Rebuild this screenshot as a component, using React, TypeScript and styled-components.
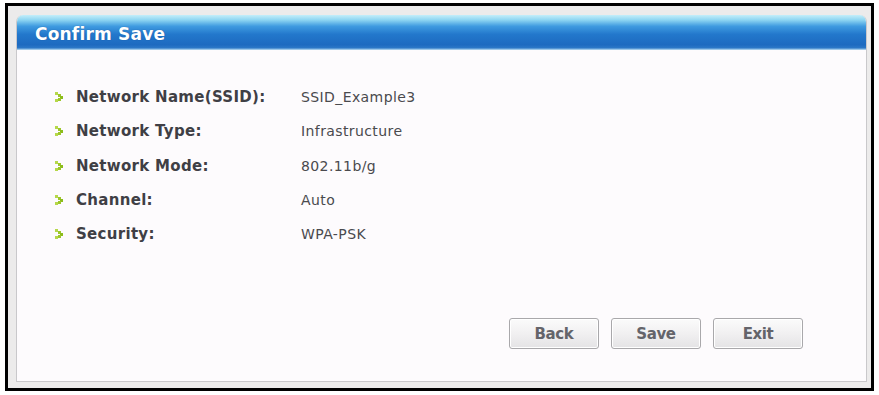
import React from "react";
import styled, { createGlobalStyle } from "styled-components";

const GlobalStyle = createGlobalStyle`
    html, body {
        margin: 0;
        padding: 0;
        background: #ffffff;
    }
`;

const Frame = styled.div`
    box-sizing: border-box;
    margin: 3px 0 0 5px;
    width: 869px;
    height: 388px;
    border: 3px solid #000;
    background: #ecebeb;
    padding: 9px 4px 6px 8px;
    display: flex;
`;

const Panel = styled.div`
    flex: 1;
    display: flex;
    flex-direction: column;
    border: 1px solid #c9c8cb;
    border-top: none;
    border-radius: 7px 7px 0 0;
    background: #fdfbfd;
    overflow: hidden;
`;

const Header = styled.div`
    height: 35px;
    box-sizing: border-box;
    padding: 6px 0 0 18px;
    background: linear-gradient(
        to bottom,
        #c4eefa 0%,
        #8fd6f2 14%,
        #3f9be0 32%,
        #2378cc 55%,
        #1d6ac0 85%,
        #2c78c7 94%,
        #bfe0f3 100%
    );
    color: #ffffff;
    font-family: "DejaVu Sans", Tahoma, sans-serif;
    font-weight: bold;
    font-size: 17px;
    line-height: 26px;
    letter-spacing: 0.2px;
    text-shadow: 0 0 1px rgba(0, 40, 100, 0.5);
`;

const Body = styled.div`
    flex: 1;
    display: flex;
    flex-direction: column;
    padding: 30px 0 0 38px;
`;

const Rows = styled.div`
    display: flex;
    flex-direction: column;
`;

const Row = styled.div`
    display: flex;
    align-items: center;
    height: 34.25px;
`;

const Bullet = styled.svg`
    width: 9px;
    height: 10px;
    margin-right: 12px;
    flex: none;
`;

const Label = styled.div`
    width: 225px;
    font-family: "DejaVu Sans", Tahoma, sans-serif;
    font-weight: bold;
    font-size: 15px;
    color: #3f3f45;
    letter-spacing: 0.3px;
`;

const Value = styled.div`
    font-family: "DejaVu Sans", Tahoma, sans-serif;
    font-size: 14px;
    color: #4a4a4e;
    letter-spacing: 0.4px;
`;

const Buttons = styled.div`
    display: flex;
    gap: 12px;
    margin-top: 67px;
    margin-left: 454px;
`;

const Button = styled.button`
    width: 90px;
    height: 31px;
    box-sizing: border-box;
    border: 1px solid #a9a8ab;
    border-radius: 3px;
    background: linear-gradient(to bottom, #fbfbfb 0%, #f1f0f1 50%, #e4e3e5 100%);
    box-shadow: inset 0 0 0 1px #ffffff;
    font-family: "DejaVu Sans", Tahoma, sans-serif;
    font-weight: bold;
    font-size: 15px;
    color: #64646a;
    letter-spacing: -0.4px;
    padding: 0;
    cursor: pointer;
`;

const Chevron = () => (
    <Bullet viewBox="0 0 9 10">
        <rect x="0" y="0" width="3" height="3" fill="#b6d84a" />
        <rect x="3" y="2" width="3" height="3" fill="#9cc62a" />
        <rect x="5" y="4" width="3" height="3" fill="#8cbc1c" />
        <rect x="3" y="6" width="3" height="3" fill="#9cc62a" />
        <rect x="0" y="7" width="3" height="3" fill="#b6d84a" />
    </Bullet>
);

const items = [
    { label: "Network Name(SSID):", value: "SSID_Example3" },
    { label: "Network Type:", value: "Infrastructure" },
    { label: "Network Mode:", value: "802.11b/g" },
    { label: "Channel:", value: "Auto" },
    { label: "Security:", value: "WPA-PSK" },
];

const App: React.FC = () => {
    return (
        <>
            <GlobalStyle />
            <Frame>
                <Panel>
                    <Header>Confirm Save</Header>
                    <Body>
                        <Rows>
                            {items.map((item) => (
                                <Row key={item.label}>
                                    <Chevron />
                                    <Label>{item.label}</Label>
                                    <Value>{item.value}</Value>
                                </Row>
                            ))}
                        </Rows>
                        <Buttons>
                            <Button>Back</Button>
                            <Button>Save</Button>
                            <Button>Exit</Button>
                        </Buttons>
                    </Body>
                </Panel>
            </Frame>
        </>
    );
};

export default App;
